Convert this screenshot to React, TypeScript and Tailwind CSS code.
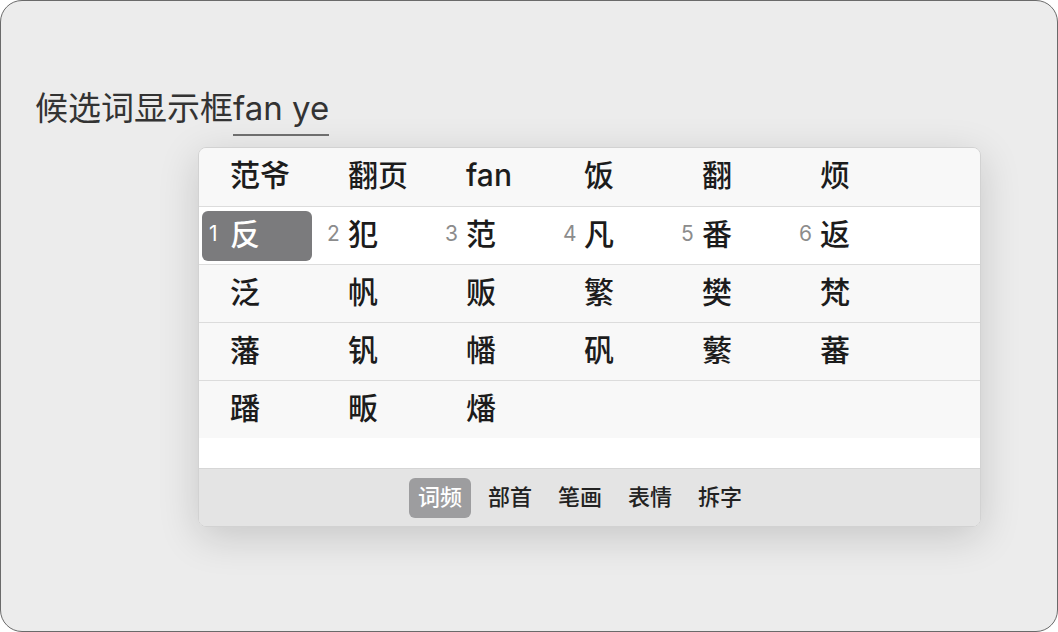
const FONT = "font-['Inter','Noto_Sans_CJK_SC',sans-serif]";

type Cell = { num?: string; text: string };

const rows: Cell[][] = [
  [{ text: "范爷" }, { text: "翻页" }, { text: "fan" }, { text: "饭" }, { text: "翻" }, { text: "烦" }],
  [
    { num: "1", text: "反" },
    { num: "2", text: "犯" },
    { num: "3", text: "范" },
    { num: "4", text: "凡" },
    { num: "5", text: "番" },
    { num: "6", text: "返" },
  ],
  [{ text: "泛" }, { text: "帆" }, { text: "贩" }, { text: "繁" }, { text: "樊" }, { text: "梵" }],
  [{ text: "藩" }, { text: "钒" }, { text: "幡" }, { text: "矾" }, { text: "蘩" }, { text: "蕃" }],
  [{ text: "蹯" }, { text: "畈" }, { text: "燔" }],
];

const tabs = ["词频", "部首", "笔画", "表情", "拆字"];

function CandidateRow({ cells, index }: { cells: Cell[]; index: number }) {
  const active = index === 1;
  const last = index === rows.length - 1;
  const height = index === 0 ? "h-[59px]" : last ? "h-[57px]" : "h-[58px]";
  return (
    <div
      className={`grid grid-cols-[repeat(6,118px)] pl-[3px] ${height} ${
        active ? "bg-white" : "bg-[#f8f8f8]"
      } ${last ? "" : "border-b border-[#dcdcdc]"}`}
    >
      {cells.map((c, i) => {
        const selected = active && i === 0;
        return (
          <div key={i} className="flex items-center">
            <div
              className={`flex h-[50px] w-[110px] items-center pl-[7px] pb-[4px] rounded-[6px] ${
                selected ? "bg-[#7b7b7d] text-white" : "text-[#1c1c1c]"
              }`}
            >
              <span
                className={`w-[21px] text-[21px] leading-none ${
                  selected ? "text-white" : "text-[#8c8c8c]"
                }`}
              >
                {c.num ?? ""}
              </span>
              <span className="text-[30px] font-medium leading-none">{c.text}</span>
            </div>
          </div>
        );
      })}
    </div>
  );
}

export default function App() {
  return (
    <div className={`h-[632px] w-[1058px] bg-white ${FONT}`}>
      <div className="h-full w-full rounded-[22px] border border-[#6a6a6a] bg-[#ececec]">
        <div className="ml-[34px] pt-[87px] flex items-start text-[33px] leading-[40px] text-[#333]">
          <span>候选词显示框</span>
          <span className="inline-block border-b-2 border-[#6e6e6e] pb-[6px]">fan ye</span>
        </div>
        <div className="ml-[197px] mt-[11px] w-[783px] overflow-hidden rounded-[8px] border border-[#d2d2d2] shadow-[0_10px_40px_rgba(0,0,0,0.16)]">
          {rows.map((r, i) => (
            <CandidateRow key={i} cells={r} index={i} />
          ))}
          <div className="h-[30px] bg-white" />
          <div className="flex h-[58px] items-center gap-[8px] border-t border-[#d6d6d6] bg-[#e4e4e4] pl-[210px]">
            {tabs.map((t, i) => (
              <div
                key={t}
                className={`flex h-[40px] items-center rounded-[6px] px-[9px] text-[22px] font-medium ${
                  i === 0 ? "bg-[#9d9d9f] text-white" : "text-[#222]"
                }`}
              >
                {t}
              </div>
            ))}
          </div>
        </div>
      </div>
    </div>
  );
}
